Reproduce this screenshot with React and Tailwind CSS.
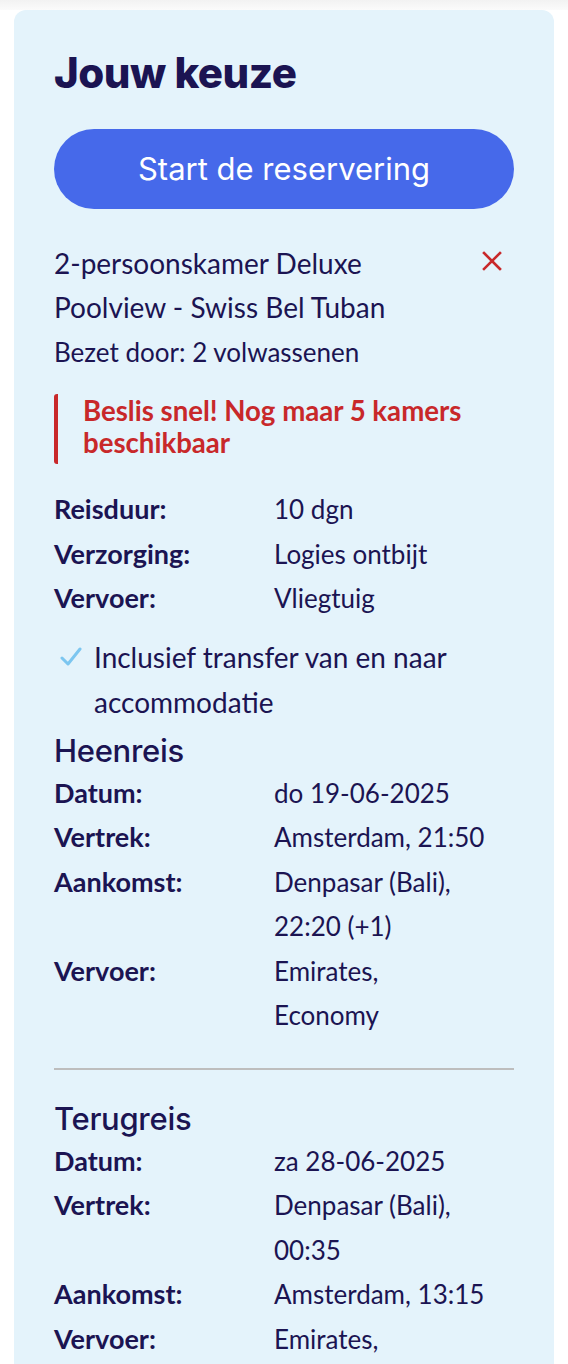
import React from "react";

const body = { fontFamily: "Lato, 'Open Sans', sans-serif" };
const head = { fontFamily: "Inter, 'Noto Sans', sans-serif" };

function Row({ label, children }) {
  return (
    <div className="grid grid-cols-[220px_1fr] leading-[44.5px] text-[26px]">
      <div className="font-bold text-[27px]">{label}</div>
      <div>{children}</div>
    </div>
  );
}

export default function App() {
  return (
    <div className="min-h-screen bg-white text-[#1b1452]" style={body}>
      <div className="h-[10px] bg-gradient-to-b from-[#f2f2f2] to-[#fbfbfb]" />
      <div className="mx-[14px] bg-[#e4f3fb] rounded-t-[12px] px-[40px] pt-[40px] pb-6">
        {/* HEADER */}
        <h2 className="text-[42px] font-extrabold leading-[46px] tracking-[-0.5px]" style={head}>
          Jouw keuze
        </h2>

        <button
          className="mt-[33px] w-full h-[80px] rounded-full bg-[#4669ea] text-white text-[31px] font-normal"
          style={head}
        >
          Start de reservering
        </button>

        {/* ROOM */}
        <div className="mt-[32px] flex justify-between">
          <div>
            <div className="text-[28px] leading-[44px]">
              2-persoonskamer Deluxe
              <br />
              Poolview - Swiss Bel Tuban
            </div>
            <div className="text-[26px] leading-[46px]">Bezet door: 2 volwassenen</div>
          </div>
          <button className="mt-[10px] mr-[12px] self-start text-[#c8282a]">
            <svg width="20" height="20" viewBox="0 0 20 20">
              <path d="M2 2 L18 18 M18 2 L2 18" stroke="currentColor" strokeWidth="2.6" strokeLinecap="square" />
            </svg>
          </button>
        </div>

        {/* ALERT */}
        <div className="mt-[19px] flex">
          <div className="w-[4px] rounded-l-[3px] bg-[#c8282a]" />
          <div className="pl-[25px] pt-[1px] pb-[5px] text-[27.6px] leading-[32px] font-bold text-[#c8282a]">
            Beslis snel! Nog maar 5 kamers
            <br />
            beschikbaar
          </div>
        </div>

        {/* DETAILS */}
        <div className="mt-[23px]">
          <Row label="Reisduur:">10 dgn</Row>
          <Row label="Verzorging:">Logies ontbijt</Row>
          <Row label="Vervoer:">Vliegtuig</Row>
        </div>

        <div className="mt-[14px] flex text-[28px] leading-[45px]">
          <svg width="22" height="22" viewBox="0 0 22 22" className="mt-[11px] ml-[6px] mr-[12px] shrink-0 text-[#7cc6f0]">
            <path d="M2 12 L8 18 L20 3" fill="none" stroke="currentColor" strokeWidth="3" strokeLinecap="round" strokeLinejoin="round" />
          </svg>
          <div>
            Inclusief transfer van en naar
            <br />
            accommodatie
          </div>
        </div>

        {/* HEENREIS */}
        <h3 className="mt-[6px] text-[31px] leading-[40px] font-medium tracking-[-0.3px]" style={head}>
          Heenreis
        </h3>
        <Row label="Datum:">do 19-06-2025</Row>
        <Row label="Vertrek:">Amsterdam, 21:50</Row>
        <Row label="Aankomst:">
          Denpasar (Bali),
          <br />
          22:20 (+1)
        </Row>
        <Row label="Vervoer:">
          Emirates,
          <br />
          Economy
        </Row>

        <hr className="mt-[30px] border-t-[2px] border-[#bdbdbd]" />

        {/* TERUGREIS */}
        <h3 className="mt-[29px] text-[31px] leading-[40px] font-medium tracking-[-0.3px]" style={head}>
          Terugreis
        </h3>
        <Row label="Datum:">za 28-06-2025</Row>
        <Row label="Vertrek:">
          Denpasar (Bali),
          <br />
          00:35
        </Row>
        <Row label="Aankomst:">Amsterdam, 13:15</Row>
        <Row label="Vervoer:">
          Emirates,
          <br />
          Economy
        </Row>
      </div>
    </div>
  );
}
